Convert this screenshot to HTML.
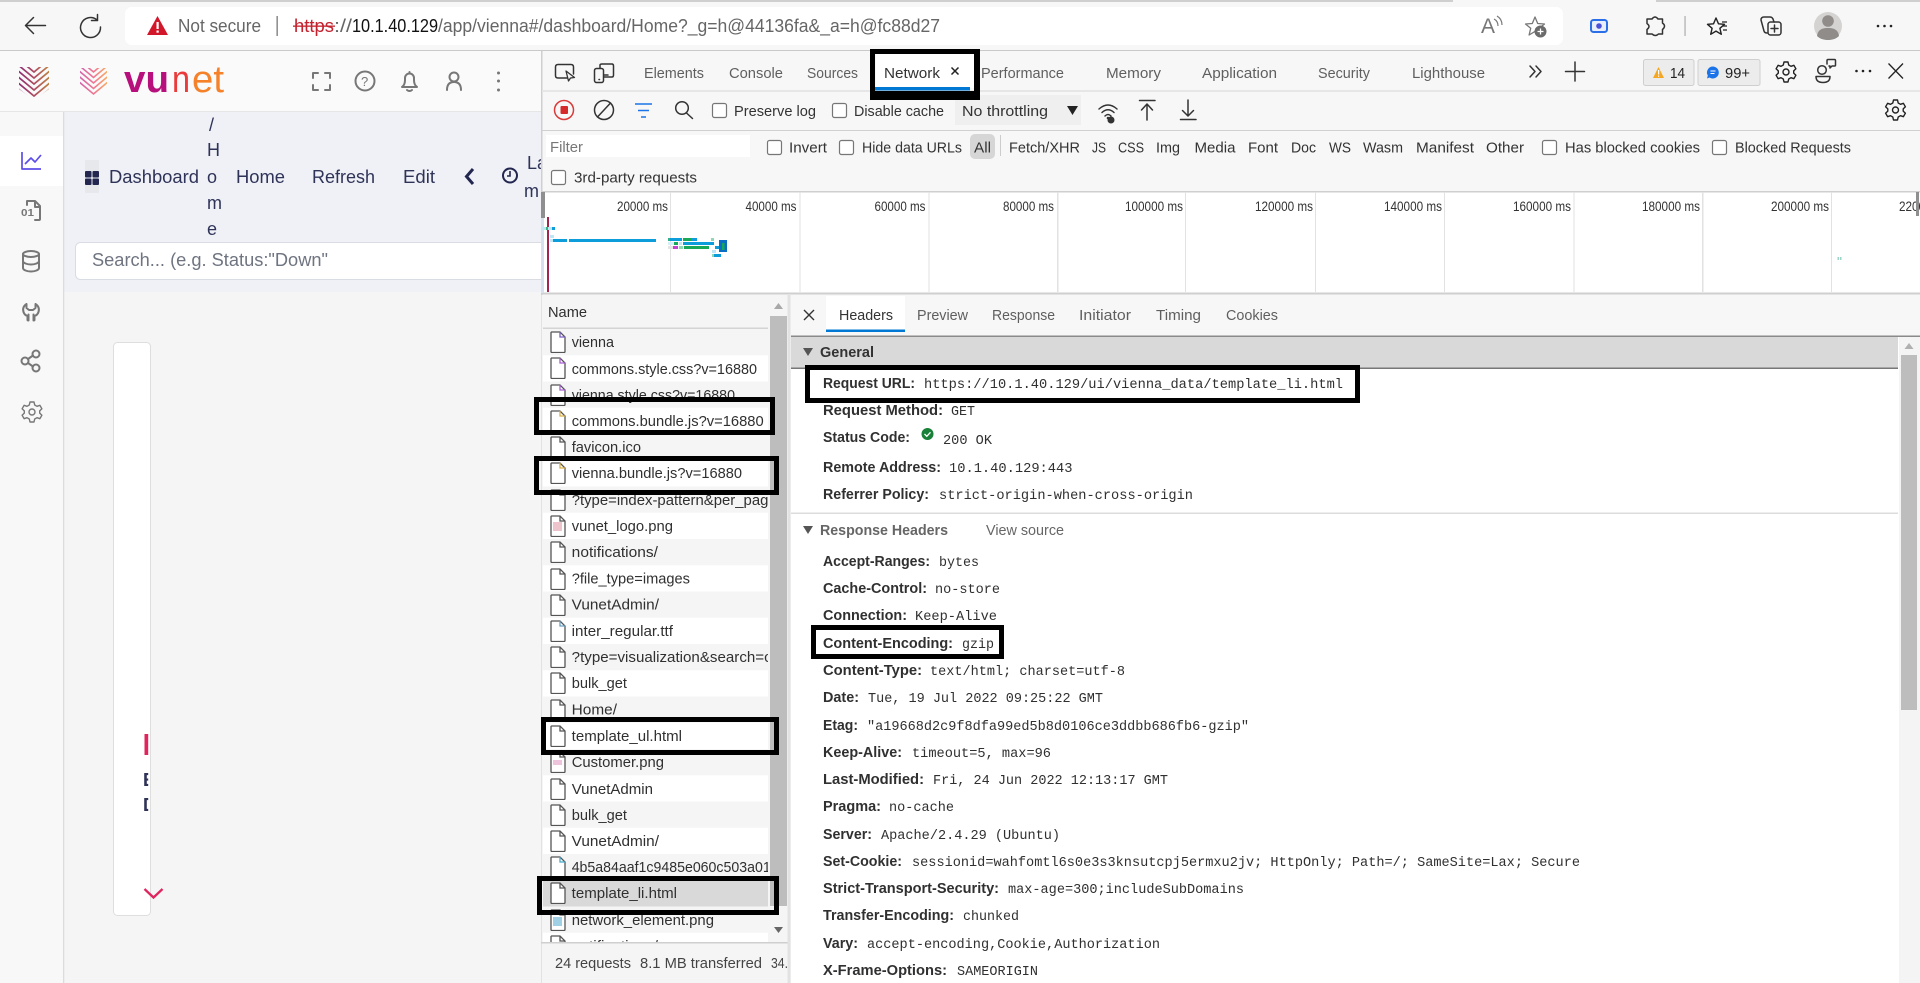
<!DOCTYPE html>
<html><head><meta charset="utf-8"><title>Vunet Dashboard with DevTools Network panel</title>
<style>
html,body{margin:0;padding:0;background:#fff;overflow:hidden}
svg{display:block}
text{font-family:"Liberation Sans",sans-serif;font-size:15px;fill:#5f5f5f;white-space:pre}
.d{fill:#333}
.n{fill:#303030}
.a{font-size:18px}
.k{font-size:18px;fill:#2f3358}
.tl{font-size:13.5px;fill:#333}
.b{font-weight:bold;font-size:14.5px;fill:#303030}
.m{font-family:"Liberation Mono",monospace;font-size:13.5px;fill:#303030}
.ic{fill:none;stroke:#333;stroke-width:1.5;stroke-linecap:round;stroke-linejoin:round}
.g{fill:none;stroke:#777;stroke-width:2;stroke-linecap:round;stroke-linejoin:round}
.cb{fill:#fff;stroke:#767676;stroke-width:1.2}
</style></head><body>
<svg xmlns="http://www.w3.org/2000/svg" width="1920" height="983" viewBox="0 0 1920 983">
<defs>
<linearGradient id="l1" x1="0" x2="1" y1="0" y2="0"><stop offset="0" stop-color="#8a2a78"/><stop offset=".55" stop-color="#b0505f"/><stop offset="1" stop-color="#c08a3a"/></linearGradient>
<linearGradient id="l2" x1="0" x2="1" y1="0" y2="0"><stop offset="0" stop-color="#cf5fb0"/><stop offset=".55" stop-color="#f07a90"/><stop offset="1" stop-color="#fbb45a"/></linearGradient>
<clipPath id="s1"><polygon points="19,67 49,67 49,89 34,100 19,89"/></clipPath>
<clipPath id="s2"><polygon points="80,68 107,68 107,87 93.5,97 80,87"/></clipPath>
<clipPath id="rows"><rect x="543" y="329" width="225" height="613"/></clipPath>
<clipPath id="left"><rect x="0" y="51" width="541" height="932"/></clipPath>
<clipPath id="cardtext"><rect x="144" y="725" width="4.2" height="100"/></clipPath>
<symbol id="f" viewBox="0 0 16 22" width="16" height="22"><path d="M1.5 1H10l5 5v14.5a1 1 0 0 1-1 1H2a1 1 0 0 1-1-1V1.500z" fill="#fff" stroke="#555" stroke-width="1.3"/><path d="M10 1v5h5" fill="none" stroke="currentColor" stroke-width="1.3"/></symbol>
<symbol id="gear" viewBox="0 0 24 24" width="24" height="24"><path d="M10 2h4l.7 3 2.3 1.300 2.900-1 2 3.500-2.200 2.100v2.200l2.200 2.100-2 3.500-2.900-1-2.300 1.300-.7 3h-4l-.7-3L7 17.700l-2.900 1-2-3.500 2.200-2.100v-2.200L2.100 8.800l2-3.500 2.900 1L9.300 5z" fill="none" stroke="currentColor" stroke-width="1.400" stroke-linejoin="round"/><circle cx="12" cy="12" r="3" fill="none" stroke="currentColor" stroke-width="1.400"/></symbol>
</defs>

<!-- Page background -->
<rect width="1920" height="983" fill="#fff"/>

<!-- Browser toolbar -->
<rect width="1920" height="50" fill="#f7f7f7"/>
<rect width="1453" height="2" fill="#cfcfcf"/><rect x="1656" width="264" height="2" fill="#cfcfcf"/>
<rect y="50" width="1920" height="1.500" fill="#c9c9c9"/>
<rect x="125" y="7" width="1438" height="38" rx="7" fill="#fff"/>
<path class="ic" stroke-width="1.600" d="M45.500 25.500H25.500M33.500 17.500l-8 8 8 8"/>
<path class="ic" d="M96.500 19.500A10 10 0 1 0 100.500 27M97.500 14.500v6h-6"/>
<polygon points="157.500,16 168,35 147,35" fill="#d3172b"/>
<rect x="156.500" y="22" width="2.200" height="7" fill="#fff"/><rect x="156.500" y="30.500" width="2.200" height="2.200" fill="#fff"/>
<text class="a" x="178" y="32" textLength="83" lengthAdjust="spacingAndGlyphs" style="fill:#666">Not secure</text>
<rect x="276.500" y="16" width="1.300" height="20" fill="#777"/>
<text class="a" x="294" y="32" textLength="40" lengthAdjust="spacingAndGlyphs" style="fill:#c4222f">https</text>
<rect x="293" y="25.500" width="42" height="1.300" fill="#c4222f"/>
<text class="a" x="334" y="32" textLength="18" lengthAdjust="spacingAndGlyphs" style="fill:#666">://</text>
<text class="a" x="352" y="32" textLength="86" lengthAdjust="spacingAndGlyphs" style="fill:#111">10.1.40.129</text>
<text class="a" x="438" y="32" textLength="502" lengthAdjust="spacingAndGlyphs" style="fill:#666">/app/vienna#/dashboard/Home?_g=h@44136fa&amp;_a=h@fc88d27</text>
<!-- toolbar right -->
<text x="1481" y="33" style="font-size:21px;fill:#777" textLength="14" lengthAdjust="spacingAndGlyphs">A</text>
<path d="M1494 19q4 2 4 7M1497 16q5 3 5 9" fill="none" stroke="#777" stroke-width="1.200"/>
<path d="M1535 17l2.700 6.500 6.800.5-5.200 4.300 1.600 6.700-5.900-3.600-5.900 3.600 1.600-6.700-5.200-4.300 6.800-.5z" fill="#fff" stroke="#777" stroke-width="1.300" stroke-linejoin="round"/>
<circle cx="1540.500" cy="31.500" r="6" fill="#6b6b6b"/><path d="M1540.500 28.500v6M1537.500 31.500h6" stroke="#fff" stroke-width="1.300"/>
<rect x="1591" y="20" width="16" height="12" rx="2.500" fill="#e8eefc" stroke="#2a6fe8" stroke-width="2"/><circle cx="1599" cy="26" r="2.800" fill="#4a50d8"/>
<path class="ic" d="M1652 19q3-4 6 0h4.500v4q4 3 0 6.500v4.500h-4q-3 3-6.500 0H1647v-4.500q4-3 0-6V19z" stroke-width="1.400"/>
<rect x="1684.300" y="16" width="1.500" height="20" fill="#bbb"/>
<path d="M1716 18l2.500 5.800 6 .5-4.600 4 1.400 6-5.300-3.200-5.300 3.200 1.400-6-4.600-4 6-.5z" fill="none" stroke="#222" stroke-width="1.400" stroke-linejoin="round"/>
<path d="M1722 22h5M1723 26h4M1723 30h4" stroke="#222" stroke-width="1.200"/>
<rect x="1768" y="22" width="13" height="13" rx="2.500" class="ic" stroke-width="1.300"/><path class="ic" d="M1774.500 25v7M1771 28.500h7" stroke-width="1.300"/><path class="ic" d="M1761 20q0-3 3-3l6 0q2 0 3 2l1 3M1761 20l3 11q.6 2 3 2" stroke-width="1.300"/>
<circle cx="1828" cy="26" r="14" fill="#d4d3d1"/><circle cx="1828" cy="21" r="5.800" fill="#8f8c89"/><path d="M1817 36c1-7 6-8 11-8s10 1 11 8c-3 3-7 4-11 4s-8-1-11-4z" fill="#8f8c89"/>
<circle cx="1878" cy="26" r="1.300" fill="#222"/><circle cx="1884.500" cy="26" r="1.300" fill="#222"/><circle cx="1891" cy="26" r="1.300" fill="#222"/>

<!-- App left area -->
<g clip-path="url(#left)">
<rect x="0" y="51" width="541" height="932" fill="#f5f5f5"/>
<rect x="63" y="111" width="478" height="181" fill="#eff1f6"/>
<rect x="0" y="111" width="63" height="872" fill="#f8f8f9"/>
<rect x="63" y="111" width="1.300" height="872" fill="#dcdcdc"/>
<rect x="0" y="51" width="541" height="60" fill="#fafafa"/>
<rect x="0" y="111" width="541" height="1" fill="#e6e6e6"/>
<rect x="0" y="136" width="63" height="50" fill="#fff"/>
<!-- logos -->
<g clip-path="url(#s1)" fill="none" stroke="url(#l1)" stroke-width="1.700">
<path d="M17 58L34 72 51 58M17 64L34 78 51 64M17 70L34 84 51 70M17 76L34 90 51 76M17 82L34 96 51 82M17 88L34 102 51 88"/></g>
<g clip-path="url(#s2)" fill="none" stroke="url(#l2)" stroke-width="1.600">
<path d="M78 59L93.500 72 109 59M78 64.500L93.500 77.500 109 64.500M78 70L93.500 83 109 70M78 75.500L93.500 88.500 109 75.500M78 81L93.500 94 109 81M78 86.500L93.500 99.500 109 86.500"/></g>
<text x="124" y="92" style="font-size:38px;font-weight:bold;fill:#b70f7c" textLength="45" lengthAdjust="spacingAndGlyphs">vu</text>
<text x="172" y="92" style="font-size:38px;fill:#ea3a3a" textLength="18" lengthAdjust="spacingAndGlyphs">n</text>
<text x="192" y="92" style="font-size:38px;fill:#f5822a" textLength="32" lengthAdjust="spacingAndGlyphs">et</text>
<!-- header icons -->
<path class="g" stroke-width="1.400" d="M313 78v-5h5M325 73h5v5M330 85v5h-5M318 90h-5v-5" style="stroke:#777"/>
<circle cx="365" cy="81" r="9.500" class="g" style="stroke:#777" stroke-width="1.300"/><text x="361" y="86" style="font-size:13px;fill:#777">?</text>
<path class="g" stroke-width="1.300" style="stroke:#777" d="M402 87q3-2 3-7v-2a4.500 4.500 0 0 1 9 0v2q0 5 3 7zM407 90q2.500 2 5 0M409.500 72v1.500"/>
<circle cx="454" cy="77" r="4.500" class="g" stroke-width="1.300" style="stroke:#777"/><path class="g" stroke-width="1.300" style="stroke:#777" d="M447 90q0-8 7-8t7 8"/>
<circle cx="498.500" cy="73" r="1.500" fill="#777"/><circle cx="498.500" cy="81" r="1.500" fill="#777"/><circle cx="498.500" cy="90" r="1.500" fill="#777"/>
<!-- sidebar icons -->
<path d="M22 152v17h19M25 164l6-6 4 4 6-7" fill="none" stroke="#5b4fe8" stroke-width="1.700" stroke-linejoin="round"/>
<path class="g" stroke-width="1.500" d="M27 205v-4h8l5 5v13q0 1-1 1h-4M35 201v6h5"/><text x="21" y="216" style="font-size:10px;font-weight:bold;fill:#777" textLength="13" lengthAdjust="spacingAndGlyphs">01</text>
<ellipse cx="31" cy="254" rx="8" ry="3" class="g" stroke-width="1.600"/><path class="g" stroke-width="1.600" d="M23 254v14c0 2 4 3.500 8 3.500s8-1.500 8-3.500v-14M23 261c0 2 4 3.500 8 3.500s8-1.500 8-3.500"/>
<path class="g" stroke-width="1.500" d="M26.500 304q-4.500 3-3 8 1 3 4 4v4q0 .5 1 .5M35.500 304q4.500 3 3 8-1 3-4 4v4q0 .5-1 .5M26.500 304v4l2.500 2h4l2.500-2v-4M28.500 320.500v-6M33.500 320.500v-6"/>
<circle cx="36" cy="354" r="3.500" class="g" stroke-width="1.600"/><circle cx="25" cy="361" r="3.500" class="g" stroke-width="1.600"/><circle cx="36" cy="368" r="3.500" class="g" stroke-width="1.600"/><path class="g" stroke-width="1.600" d="M28 359l5-3.500M28 363l5 3.500"/>
<use href="#gear" x="20" y="400" style="color:#777"/>
<!-- breadcrumb -->
<rect x="85" y="160" width="14" height="33" fill="#e6e8ec"/>
<g fill="#23264f"><rect x="85" y="171" width="6.500" height="6.500" rx="1"/><rect x="92.500" y="171" width="6.500" height="6.500" rx="1"/><rect x="85" y="178.500" width="6.500" height="6.500" rx="1"/><rect x="92.500" y="178.500" width="6.500" height="6.500" rx="1"/></g>
<text class="k" x="109" y="183" textLength="90" lengthAdjust="spacingAndGlyphs">Dashboard</text>
<text class="k" x="209" y="131">/</text>
<text class="k" x="207" y="156">H</text>
<text class="k" x="207" y="183">o</text>
<text class="k" x="207" y="209">m</text>
<text class="k" x="207" y="235">e</text>
<text class="k" x="236" y="183" textLength="49" lengthAdjust="spacingAndGlyphs">Home</text>
<text class="k" x="312" y="183" textLength="63" lengthAdjust="spacingAndGlyphs">Refresh</text>
<text class="k" x="403" y="183" textLength="32" lengthAdjust="spacingAndGlyphs">Edit</text>
<path d="M473 169l-6.500 7.500 6.500 7.500" fill="none" stroke="#23264f" stroke-width="3"/>
<circle cx="510" cy="175.500" r="7" fill="none" stroke="#23264f" stroke-width="2"/><path d="M510 171v5h-3" fill="none" stroke="#23264f" stroke-width="1.600"/>
<text class="k" x="527" y="169">La</text>
<text class="k" x="524" y="197">m</text>
<!-- search -->
<rect x="75.500" y="242.500" width="480" height="37" rx="5" fill="#fff" stroke="#d9dce3"/>
<text class="a" x="92" y="266" textLength="236" lengthAdjust="spacingAndGlyphs" style="fill:#6e7480">Search... (e.g. Status:"Down"</text>
<!-- card -->
<rect x="113.500" y="342.500" width="37" height="573" rx="4" fill="#fff" stroke="#dedede"/>
<rect x="144.500" y="734" width="3.700" height="21" fill="#e0245e"/>
<g clip-path="url(#cardtext)">
<text x="143" y="786" style="font-size:18px;font-weight:bold;fill:#2f3358">E</text>
<text x="143" y="811" style="font-size:18px;font-weight:bold;fill:#2f3358">D</text>
</g>
<path d="M144.500 889l9 8.500 9-8.500" fill="none" stroke="#e0245e" stroke-width="2.300"/>
</g>

<!-- DevTools -->
<rect x="541" y="51" width="1379" height="932" fill="#f7f7f7"/>
<rect x="541" y="51" width="1.500" height="932" fill="#cfcfcf"/>
<rect x="542" y="90" width="1378" height="2" fill="#e6e6e6"/>
<rect x="542" y="130" width="1378" height="1" fill="#d0d0d0"/>
<rect x="876" y="54" width="99" height="34" fill="#fff"/>
<rect x="875" y="87" width="95" height="3.500" fill="#0078d4"/>
<!-- tab icons -->
<path class="ic" d="M567 78h-9q-2.500 0-2.500-2.500V67q0-2.500 2.500-2.500h13q2.500 0 2.500 2.500v7"/><path d="M566 71l2.500 10 2-3 4-.5z" fill="#f7f7f7" stroke="#333" stroke-width="1.300" stroke-linejoin="round"/>
<rect x="594.500" y="68.500" width="9" height="14" rx="2" class="ic"/><path class="ic" d="M600 68v-3q0-1 2-1h10q1.500 0 1.500 2v9q0 2-1.500 2h-8M604 75h4M599 79.500h.5"/>
<text x="644" y="78" textLength="60" lengthAdjust="spacingAndGlyphs">Elements</text>
<text x="729" y="78" textLength="54" lengthAdjust="spacingAndGlyphs">Console</text>
<text x="807" y="78" textLength="51" lengthAdjust="spacingAndGlyphs">Sources</text>
<text class="d" x="884" y="78" textLength="56" lengthAdjust="spacingAndGlyphs">Network</text>
<path d="M951.500 67.500l7 7M958.500 67.500l-7 7" stroke="#222" stroke-width="1.500"/>
<text x="981" y="78" textLength="83" lengthAdjust="spacingAndGlyphs">Performance</text>
<text x="1106" y="78" textLength="55" lengthAdjust="spacingAndGlyphs">Memory</text>
<text x="1202" y="78" textLength="75" lengthAdjust="spacingAndGlyphs">Application</text>
<text x="1318" y="78" textLength="52" lengthAdjust="spacingAndGlyphs">Security</text>
<text x="1412" y="78" textLength="73" lengthAdjust="spacingAndGlyphs">Lighthouse</text>
<path class="ic" d="M1530 66l5 5.500-5 5.500M1536 66l5 5.500-5 5.500"/>
<path class="ic" d="M1575 62v19M1565.500 71.500h19"/>
<rect x="1643.500" y="59.500" width="50.500" height="26" rx="2" fill="#ececec" stroke="#cfcfcf"/>
<polygon points="1658.500,67 1664,78 1653,78" fill="#f5a623"/><rect x="1658" y="70" width="1.200" height="4.500" fill="#fff"/><rect x="1658" y="75.500" width="1.200" height="1.300" fill="#fff"/>
<text class="d" x="1670" y="78" textLength="15" lengthAdjust="spacingAndGlyphs" style="fill:#222">14</text>
<rect x="1698" y="59.500" width="62" height="26" rx="2" fill="#ececec" stroke="#cfcfcf"/>
<path d="M1713 66.500a6 6 0 1 1-3.500 11l-2.500 1 .8-3a6 6 0 0 1 5.200-9z" fill="#1a73e8"/><path d="M1710.500 71h5M1710.500 73.500h4" stroke="#fff" stroke-width=".9"/>
<text class="d" x="1725" y="78" textLength="25" lengthAdjust="spacingAndGlyphs" style="fill:#222">99+</text>
<use href="#gear" x="1774" y="60" style="color:#222"/>
<circle cx="1822" cy="70" r="4.300" class="ic" stroke-width="1.300"/><path class="ic" stroke-width="1.300" d="M1816 76.500h14q0 6-7 6t-7-6zM1827 64v-3.500q0-1 1-1h6.500q1 0 1 1v4.500q0 1-1 1H1832l-2 2v-2h-1"/>
<circle cx="1856.500" cy="71" r="1.300" fill="#222"/><circle cx="1863" cy="71" r="1.300" fill="#222"/><circle cx="1870" cy="71" r="1.300" fill="#222"/>
<path d="M1888.500 63.500l14.500 15M1903 63.500l-14.500 15" stroke="#222" stroke-width="1.300"/>

<!-- network toolbar -->
<circle cx="564" cy="110" r="9.500" fill="none" stroke="#d93a3a" stroke-width="1.500"/><rect x="560.500" y="106" width="7.500" height="8" rx="1" fill="#d42a2a"/>
<circle cx="604" cy="110" r="9.500" class="ic"/><path class="ic" d="M597.500 117l13-14"/>
<path d="M635 104h17M638 110.500h11M641 117h5" stroke="#1a73e8" stroke-width="1.500"/>
<circle cx="682" cy="108" r="6.300" class="ic"/><path class="ic" d="M686.500 113l6 5.500" stroke-width="1.700"/>
<rect x="712.500" y="103.500" width="14" height="14" rx="2" class="cb"/>
<text class="d" x="734" y="116" textLength="82" lengthAdjust="spacingAndGlyphs">Preserve log</text>
<rect x="832.500" y="103.500" width="14" height="14" rx="2" class="cb"/>
<text class="d" x="854" y="116" textLength="90" lengthAdjust="spacingAndGlyphs">Disable cache</text>
<rect x="955" y="95" width="126" height="30" fill="#efefef"/>
<text class="d" x="962" y="116" textLength="86" lengthAdjust="spacingAndGlyphs">No throttling</text>
<polygon points="1067,106 1078,106 1072.500,115" fill="#222"/>
<path class="ic" stroke-width="1.300" d="M1099 109q9-8 18 0M1102 112.500q6-5.500 12 0M1105 116q3-3 6 0"/><circle cx="1111" cy="120" r="3.500" fill="#333"/><circle cx="1108" cy="118" r="1.300" fill="#333"/>
<path class="ic" stroke-width="1.200" d="M1139.500 100.500h15.500M1147 104v16M1141.500 110l5.500-6 5.500 6"/>
<path class="ic" stroke-width="1.200" d="M1180.500 119.500h15.500M1188 100v16M1182.500 110.500l5.500 5.500 5.500-5.500"/>
<use href="#gear" x="1883.500" y="98" style="color:#222"/>

<!-- filter row -->
<rect x="546" y="135" width="204" height="22" fill="#fff"/>
<text x="550" y="152" textLength="33" lengthAdjust="spacingAndGlyphs" style="fill:#777">Filter</text>
<rect x="767.500" y="140.500" width="14" height="14" rx="2" class="cb"/>
<text class="d" x="789" y="152.500" textLength="38" lengthAdjust="spacingAndGlyphs">Invert</text>
<rect x="839.500" y="140.500" width="14" height="14" rx="2" class="cb"/>
<text class="d" x="862" y="152.500" textLength="100" lengthAdjust="spacingAndGlyphs">Hide data URLs</text>
<rect x="970" y="134" width="25" height="25" rx="5" fill="#d6d6d6"/>
<text class="d" x="974" y="152.500" textLength="17" lengthAdjust="spacingAndGlyphs">All</text>
<rect x="1000" y="135" width="1" height="21" fill="#ccc"/>
<g>
<text class="d" x="1009" y="152.500" textLength="71" lengthAdjust="spacingAndGlyphs">Fetch/XHR</text>
<text class="d" x="1092" y="152.500" textLength="14" lengthAdjust="spacingAndGlyphs">JS</text>
<text class="d" x="1118" y="152.500" textLength="26" lengthAdjust="spacingAndGlyphs">CSS</text>
<text class="d" x="1156" y="152.500" textLength="24" lengthAdjust="spacingAndGlyphs">Img</text>
<text class="d" x="1194.500" y="152.500" textLength="41" lengthAdjust="spacingAndGlyphs">Media</text>
<text class="d" x="1248" y="152.500" textLength="30" lengthAdjust="spacingAndGlyphs">Font</text>
<text class="d" x="1291" y="152.500" textLength="25" lengthAdjust="spacingAndGlyphs">Doc</text>
<text class="d" x="1329" y="152.500" textLength="22" lengthAdjust="spacingAndGlyphs">WS</text>
<text class="d" x="1363" y="152.500" textLength="40" lengthAdjust="spacingAndGlyphs">Wasm</text>
<text class="d" x="1416" y="152.500" textLength="58" lengthAdjust="spacingAndGlyphs">Manifest</text>
<text class="d" x="1486" y="152.500" textLength="38" lengthAdjust="spacingAndGlyphs">Other</text>
</g>
<rect x="1542.500" y="140.500" width="14" height="14" rx="2" class="cb"/>
<text class="d" x="1565" y="152.500" textLength="135" lengthAdjust="spacingAndGlyphs">Has blocked cookies</text>
<rect x="1712.500" y="140.500" width="14" height="14" rx="2" class="cb"/>
<text class="d" x="1735" y="152.500" textLength="116" lengthAdjust="spacingAndGlyphs">Blocked Requests</text>
<rect x="551.500" y="170.500" width="14" height="14" rx="2" class="cb"/>
<text class="d" x="574" y="182.500" textLength="123" lengthAdjust="spacingAndGlyphs">3rd-party requests</text>

<!-- timeline -->
<rect x="542" y="191" width="1378" height="102" fill="#fff"/>
<rect x="542" y="191" width="1378" height="1.500" fill="#cfcfcf"/>
<rect x="542" y="292.500" width="1378" height="2" fill="#cfcfcf"/>
<g fill="#e2e2e2">
<rect x="670" y="192" width="1" height="100"/><rect x="799.500" y="192" width="1" height="100"/><rect x="928.500" y="192" width="1" height="100"/><rect x="1057" y="192" width="1.500" height="100"/><rect x="1185" y="192" width="1" height="100"/><rect x="1315" y="192" width="1" height="100"/><rect x="1444" y="192" width="1" height="100"/><rect x="1573.500" y="192" width="1" height="100"/><rect x="1702" y="192" width="1.500" height="100"/><rect x="1831" y="192" width="1" height="100"/>
</g>
<g>
<text class="tl" x="617" y="211" textLength="51" lengthAdjust="spacingAndGlyphs">20000 ms</text>
<text class="tl" x="745.500" y="211" textLength="51" lengthAdjust="spacingAndGlyphs">40000 ms</text>
<text class="tl" x="874.500" y="211" textLength="51" lengthAdjust="spacingAndGlyphs">60000 ms</text>
<text class="tl" x="1003" y="211" textLength="51" lengthAdjust="spacingAndGlyphs">80000 ms</text>
<text class="tl" x="1125" y="211" textLength="58" lengthAdjust="spacingAndGlyphs">100000 ms</text>
<text class="tl" x="1255" y="211" textLength="58" lengthAdjust="spacingAndGlyphs">120000 ms</text>
<text class="tl" x="1384" y="211" textLength="58" lengthAdjust="spacingAndGlyphs">140000 ms</text>
<text class="tl" x="1513" y="211" textLength="58" lengthAdjust="spacingAndGlyphs">160000 ms</text>
<text class="tl" x="1642" y="211" textLength="58" lengthAdjust="spacingAndGlyphs">180000 ms</text>
<text class="tl" x="1771" y="211" textLength="58" lengthAdjust="spacingAndGlyphs">200000 ms</text>
<text class="tl" x="1899" y="211" textLength="58" lengthAdjust="spacingAndGlyphs">220000 ms</text>
</g>
<rect x="541" y="192" width="4" height="26" fill="#8f8f8f"/><rect x="1916" y="192" width="3" height="24" fill="#8f8f8f"/>
<rect x="541" y="218" width="3" height="75" fill="#d6e0ee"/>
<rect x="547" y="217" width="2" height="75" fill="#a4244f"/>
<!-- waterfall -->
<g>
<rect x="541" y="227" width="14" height="3" fill="#bfe6f5"/><rect x="546" y="227" width="2" height="3" fill="#35b37e"/><rect x="552" y="227" width="3" height="3" fill="#0d9ddb"/>
<rect x="550" y="235" width="4" height="3" fill="#bfe6f5"/>
<rect x="550" y="239" width="4" height="3" fill="#bfe6f5"/><rect x="553" y="239" width="14" height="3" fill="#0d9ddb"/><rect x="569" y="239" width="87" height="3" fill="#0d9ddb"/>
<rect x="668" y="238" width="2" height="3" fill="#35b37e"/><rect x="670" y="238" width="12" height="3" fill="#0d9ddb"/><rect x="683" y="238" width="8" height="3" fill="#17a858"/><rect x="691" y="238" width="6" height="3" fill="#0d9ddb"/><rect x="711" y="238" width="3" height="3" fill="#8ed8b4"/>
<rect x="668" y="242" width="6" height="3" fill="#d5eef8"/><rect x="674" y="242" width="4" height="3" fill="#17a858"/><rect x="679" y="242" width="3" height="3" fill="#bfe6f5"/><rect x="683" y="242" width="31" height="3" fill="#0d9ddb"/>
<rect x="668" y="246" width="5" height="3" fill="#e4e4e4"/><rect x="673" y="246" width="5" height="3" fill="#c93fd0"/><rect x="679" y="246" width="4" height="3" fill="#8ed8b4"/><rect x="684" y="246" width="25" height="3" fill="#17a858"/>
<rect x="715" y="246" width="5" height="3" fill="#0d9ddb"/>
<rect x="712" y="250" width="4" height="3" fill="#bfe6f5"/><rect x="712" y="254" width="3" height="3" fill="#8ed8b4"/><rect x="714" y="254" width="7" height="3" fill="#0d9ddb"/>
<rect x="719" y="240" width="8" height="12" fill="#0a6fc2"/><rect x="722" y="243" width="2.500" height="7" fill="#17a858"/>
<rect x="1837.500" y="257" width="1.500" height="3" fill="#9ad5c8"/><rect x="1840" y="257" width="1.500" height="3" fill="#9ad5c8"/>
</g>

<!-- Name column -->
<rect x="541.500" y="295" width="249" height="688" fill="#f5f5f5"/>
<rect x="543" y="329" width="225" height="613" fill="#fff"/>
<g fill="#f5f5f5">
<rect x="543" y="329" width="225" height="26.250"/><rect x="543" y="381.500" width="225" height="26.250"/><rect x="543" y="434" width="225" height="26.250"/><rect x="543" y="486.500" width="225" height="26.250"/><rect x="543" y="539" width="225" height="26.250"/><rect x="543" y="591.500" width="225" height="26.250"/><rect x="543" y="644" width="225" height="26.250"/><rect x="543" y="696.500" width="225" height="26.250"/><rect x="543" y="749" width="225" height="26.250"/><rect x="543" y="801.500" width="225" height="26.250"/><rect x="543" y="854" width="225" height="26.250"/><rect x="543" y="906.500" width="225" height="26.250"/>
</g>
<rect x="543" y="880.250" width="225" height="26.250" fill="#d9d9d9"/>
<rect x="543" y="327.500" width="225" height="1.500" fill="#d4d4d4"/>
<rect x="541.500" y="942" width="249" height="1.500" fill="#cfcfcf"/>
<text class="n" x="548" y="317" textLength="39" lengthAdjust="spacingAndGlyphs">Name</text>
<!-- scrollbar -->
<rect x="770" y="316" width="17" height="590" fill="#bdbdbd"/>
<polygon points="778.500,303 783,309 774,309" fill="#a8a8a8"/><polygon points="778.500,933 783,927 774,927" fill="#666"/>
<rect x="787.500" y="295" width="3" height="688" fill="#e2e2e2"/>
<g clip-path="url(#rows)">
<use href="#f" x="550" y="331" style="color:#7a5fc0"/><use href="#f" x="550" y="357" style="color:#a55fd0"/><use href="#f" x="550" y="384" style="color:#a55fd0"/><use href="#f" x="550" y="410" style="color:#d8b04a"/><use href="#f" x="550" y="436" style="color:#555"/><use href="#f" x="550" y="462" style="color:#d8b04a"/><use href="#f" x="550" y="489" style="color:#555"/><use href="#f" x="550" y="515" style="color:#555"/><use href="#f" x="550" y="541" style="color:#555"/><use href="#f" x="550" y="568" style="color:#555"/><use href="#f" x="550" y="594" style="color:#555"/><use href="#f" x="550" y="620" style="color:#6a9fc0"/><use href="#f" x="550" y="646" style="color:#555"/><use href="#f" x="550" y="672" style="color:#555"/><use href="#f" x="550" y="699" style="color:#555"/><use href="#f" x="550" y="725" style="color:#555"/><use href="#f" x="550" y="751" style="color:#555"/><use href="#f" x="550" y="778" style="color:#555"/><use href="#f" x="550" y="804" style="color:#555"/><use href="#f" x="550" y="830" style="color:#555"/><use href="#f" x="550" y="856" style="color:#4aa8c8"/><use href="#f" x="550" y="882" style="color:#555"/><use href="#f" x="550" y="909" style="color:#555"/><use href="#f" x="550" y="935" style="color:#555"/>
<rect x="553" y="522" width="9" height="9" fill="#eec4cc"/><rect x="553" y="760" width="9" height="5" fill="#eec4dc"/><rect x="553" y="917" width="9" height="9" fill="#9fd0e4"/>
<text class="n" x="571.700" y="347" textLength="42.300" lengthAdjust="spacingAndGlyphs">vienna</text>
<text class="n" x="571.700" y="374" textLength="185.300" lengthAdjust="spacingAndGlyphs">commons.style.css?v=16880</text>
<text class="n" x="571.700" y="400" textLength="163.300" lengthAdjust="spacingAndGlyphs">vienna.style.css?v=16880</text>
<text class="n" x="571.700" y="426" textLength="192" lengthAdjust="spacingAndGlyphs">commons.bundle.js?v=16880</text>
<text class="n" x="571.700" y="452" textLength="69.300" lengthAdjust="spacingAndGlyphs">favicon.ico</text>
<text class="n" x="571.700" y="478" textLength="170.300" lengthAdjust="spacingAndGlyphs">vienna.bundle.js?v=16880</text>
<text class="n" x="571.700" y="505" textLength="205" lengthAdjust="spacingAndGlyphs">?type=index-pattern&amp;per_page</text>
<text class="n" x="571.700" y="531" textLength="101.300" lengthAdjust="spacingAndGlyphs">vunet_logo.png</text>
<text class="n" x="571.700" y="557" textLength="86.300" lengthAdjust="spacingAndGlyphs">notifications/</text>
<text class="n" x="571.700" y="583.500" textLength="118.300" lengthAdjust="spacingAndGlyphs">?file_type=images</text>
<text class="n" x="571.700" y="609.500" textLength="87.300" lengthAdjust="spacingAndGlyphs">VunetAdmin/</text>
<text class="n" x="571.700" y="636" textLength="101.300" lengthAdjust="spacingAndGlyphs">inter_regular.ttf</text>
<text class="n" x="571.700" y="662" textLength="200" lengthAdjust="spacingAndGlyphs">?type=visualization&amp;search=c</text>
<text class="n" x="571.700" y="688" textLength="55.300" lengthAdjust="spacingAndGlyphs">bulk_get</text>
<text class="n" x="571.700" y="714.500" textLength="45.300" lengthAdjust="spacingAndGlyphs">Home/</text>
<text class="n" x="571.700" y="741" textLength="110.300" lengthAdjust="spacingAndGlyphs">template_ul.html</text>
<text class="n" x="571.700" y="767" textLength="92.300" lengthAdjust="spacingAndGlyphs">Customer.png</text>
<text class="n" x="571.700" y="794" textLength="81.300" lengthAdjust="spacingAndGlyphs">VunetAdmin</text>
<text class="n" x="571.700" y="820" textLength="55.300" lengthAdjust="spacingAndGlyphs">bulk_get</text>
<text class="n" x="571.700" y="846" textLength="87.300" lengthAdjust="spacingAndGlyphs">VunetAdmin/</text>
<text class="n" x="571.700" y="872" textLength="199" lengthAdjust="spacingAndGlyphs">4b5a84aaf1c9485e060c503a01</text>
<text class="n" x="571.700" y="898" textLength="105.300" lengthAdjust="spacingAndGlyphs">template_li.html</text>
<text class="n" x="571.700" y="925" textLength="142.300" lengthAdjust="spacingAndGlyphs">network_element.png</text>
<text class="n" x="571.700" y="951" textLength="86.300" lengthAdjust="spacingAndGlyphs">notifications/</text>
</g>
<text x="555" y="968" textLength="76" lengthAdjust="spacingAndGlyphs" style="fill:#444;font-size:14.500px">24 requests</text>
<text x="640" y="968" textLength="122" lengthAdjust="spacingAndGlyphs" style="fill:#444;font-size:14.500px">8.1 MB transferred</text>
<text x="771" y="968" textLength="17" lengthAdjust="spacingAndGlyphs" style="fill:#444;font-size:14.500px">34.</text>

<!-- Details pane -->
<rect x="791" y="295" width="1129" height="688" fill="#fff"/>
<rect x="791" y="295" width="1129" height="41" fill="#f7f7f7"/>
<path d="M804 310l10 10M814 310l-10 10" stroke="#333" stroke-width="1.400"/>
<rect x="826" y="296" width="79" height="34" fill="#fff"/>
<rect x="826" y="329.500" width="79" height="2.500" fill="#0078d4"/>
<text class="d" x="839" y="320" textLength="54" lengthAdjust="spacingAndGlyphs">Headers</text>
<text x="917" y="320" textLength="51" lengthAdjust="spacingAndGlyphs">Preview</text>
<text x="992" y="320" textLength="63" lengthAdjust="spacingAndGlyphs">Response</text>
<text x="1079" y="320" textLength="52" lengthAdjust="spacingAndGlyphs">Initiator</text>
<text x="1156" y="320" textLength="45" lengthAdjust="spacingAndGlyphs">Timing</text>
<text x="1226" y="320" textLength="52" lengthAdjust="spacingAndGlyphs">Cookies</text>
<rect x="791" y="336" width="1107" height="32" fill="#d9d9d9"/>
<rect x="791" y="335.500" width="1129" height="1.500" fill="#8a8a8a"/>
<rect x="791" y="367.500" width="1107" height="1.500" fill="#777"/>
<polygon points="803,348 813,348 808,356" fill="#555"/>
<text class="b" x="820" y="357" textLength="54" lengthAdjust="spacingAndGlyphs" style="fill:#333">General</text>
<!-- right scrollbar -->
<rect x="1899" y="337" width="21" height="646" fill="#f4f4f4"/>
<polygon points="1909,343 1913.500,349 1904.500,349" fill="#b0b0b0"/>
<rect x="1901" y="355" width="16" height="355" fill="#bdbdbd"/>

<text class="b" x="823" y="388" textLength="92" lengthAdjust="spacingAndGlyphs">Request URL:</text>
<text class="m" x="924" y="388" textLength="419" lengthAdjust="spacingAndGlyphs">https://10.1.40.129/ui/vienna_data/template_li.html</text>
<text class="b" x="823" y="415" textLength="120" lengthAdjust="spacingAndGlyphs">Request Method:</text>
<text class="m" x="951" y="415" textLength="24" lengthAdjust="spacingAndGlyphs">GET</text>
<text class="b" x="823" y="442" textLength="87" lengthAdjust="spacingAndGlyphs">Status Code:</text>
<circle cx="927.500" cy="434" r="6" fill="#188038"/><path d="M924.500 434l2.300 2.300 3.700-4" fill="none" stroke="#fff" stroke-width="1.300"/>
<text class="m" x="943" y="444" textLength="49" lengthAdjust="spacingAndGlyphs">200 OK</text>
<text class="b" x="823" y="472" textLength="118" lengthAdjust="spacingAndGlyphs">Remote Address:</text>
<text class="m" x="949" y="472" textLength="123.500" lengthAdjust="spacingAndGlyphs">10.1.40.129:443</text>
<text class="b" x="823" y="499" textLength="106" lengthAdjust="spacingAndGlyphs">Referrer Policy:</text>
<text class="m" x="939" y="499" textLength="254" lengthAdjust="spacingAndGlyphs">strict-origin-when-cross-origin</text>
<rect x="791" y="512.500" width="1107" height="1.500" fill="#dcdcdc"/>
<polygon points="803,526 813,526 808,534" fill="#555"/>
<text class="b" x="820" y="535" textLength="128" lengthAdjust="spacingAndGlyphs" style="fill:#666">Response Headers</text>
<text x="986" y="535" textLength="78" lengthAdjust="spacingAndGlyphs" style="fill:#666">View source</text>

<text class="b" x="823" y="566" textLength="107" lengthAdjust="spacingAndGlyphs">Accept-Ranges:</text><text class="m" x="939" y="566" textLength="40" lengthAdjust="spacingAndGlyphs">bytes</text>
<text class="b" x="823" y="593" textLength="104" lengthAdjust="spacingAndGlyphs">Cache-Control:</text><text class="m" x="935" y="593" textLength="65" lengthAdjust="spacingAndGlyphs">no-store</text>
<text class="b" x="823" y="620" textLength="84" lengthAdjust="spacingAndGlyphs">Connection:</text><text class="m" x="915" y="620" textLength="82" lengthAdjust="spacingAndGlyphs">Keep-Alive</text>
<text class="b" x="823" y="648" textLength="130" lengthAdjust="spacingAndGlyphs">Content-Encoding:</text><text class="m" x="962" y="648" textLength="32" lengthAdjust="spacingAndGlyphs">gzip</text>
<text class="b" x="823" y="675" textLength="99" lengthAdjust="spacingAndGlyphs">Content-Type:</text><text class="m" x="930" y="675" textLength="195" lengthAdjust="spacingAndGlyphs">text/html; charset=utf-8</text>
<text class="b" x="823" y="702" textLength="36" lengthAdjust="spacingAndGlyphs">Date:</text><text class="m" x="868" y="702" textLength="235" lengthAdjust="spacingAndGlyphs">Tue, 19 Jul 2022 09:25:22 GMT</text>
<text class="b" x="823" y="730" textLength="35" lengthAdjust="spacingAndGlyphs">Etag:</text><text class="m" x="867" y="730" textLength="382" lengthAdjust="spacingAndGlyphs">"a19668d2c9f8dfa99ed5b8d0106ce3ddbb686fb6-gzip"</text>
<text class="b" x="823" y="757" textLength="79" lengthAdjust="spacingAndGlyphs">Keep-Alive:</text><text class="m" x="912" y="757" textLength="139" lengthAdjust="spacingAndGlyphs">timeout=5, max=96</text>
<text class="b" x="823" y="784" textLength="101" lengthAdjust="spacingAndGlyphs">Last-Modified:</text><text class="m" x="933" y="784" textLength="235" lengthAdjust="spacingAndGlyphs">Fri, 24 Jun 2022 12:13:17 GMT</text>
<text class="b" x="823" y="811" textLength="58" lengthAdjust="spacingAndGlyphs">Pragma:</text><text class="m" x="889" y="811" textLength="65" lengthAdjust="spacingAndGlyphs">no-cache</text>
<text class="b" x="823" y="839" textLength="49" lengthAdjust="spacingAndGlyphs">Server:</text><text class="m" x="881" y="839" textLength="179" lengthAdjust="spacingAndGlyphs">Apache/2.4.29 (Ubuntu)</text>
<text class="b" x="823" y="866" textLength="79" lengthAdjust="spacingAndGlyphs">Set-Cookie:</text><text class="m" x="912" y="866" textLength="668" lengthAdjust="spacingAndGlyphs">sessionid=wahfomtl6s0e3s3knsutcpj5ermxu2jv; HttpOnly; Path=/; SameSite=Lax; Secure</text>
<text class="b" x="823" y="893" textLength="176" lengthAdjust="spacingAndGlyphs">Strict-Transport-Security:</text><text class="m" x="1008" y="893" textLength="236" lengthAdjust="spacingAndGlyphs">max-age=300;includeSubDomains</text>
<text class="b" x="823" y="920" textLength="131" lengthAdjust="spacingAndGlyphs">Transfer-Encoding:</text><text class="m" x="963" y="920" textLength="56" lengthAdjust="spacingAndGlyphs">chunked</text>
<text class="b" x="823" y="948" textLength="35" lengthAdjust="spacingAndGlyphs">Vary:</text><text class="m" x="867" y="948" textLength="293" lengthAdjust="spacingAndGlyphs">accept-encoding,Cookie,Authorization</text>
<text class="b" x="823" y="975" textLength="124" lengthAdjust="spacingAndGlyphs">X-Frame-Options:</text><text class="m" x="957" y="975" textLength="81" lengthAdjust="spacingAndGlyphs">SAMEORIGIN</text>

<!-- annotation boxes -->
<g fill="none" stroke="#000" stroke-width="5">
<rect x="872.500" y="51.500" width="105" height="46"/>
<rect x="536.500" y="399.500" width="236" height="33"/>
<rect x="536.500" y="458.500" width="240" height="34"/>
<rect x="543.500" y="719.500" width="233" height="33"/>
<rect x="539.500" y="878.500" width="237" height="34"/>
<rect x="807.500" y="367.500" width="550" height="33"/>
<rect x="813.500" y="627.500" width="188" height="29"/>
</g>
<rect x="870" y="91" width="110" height="9" fill="#000"/>
<rect x="974" y="49" width="6" height="51" fill="#000"/>
</svg>
</body></html>
